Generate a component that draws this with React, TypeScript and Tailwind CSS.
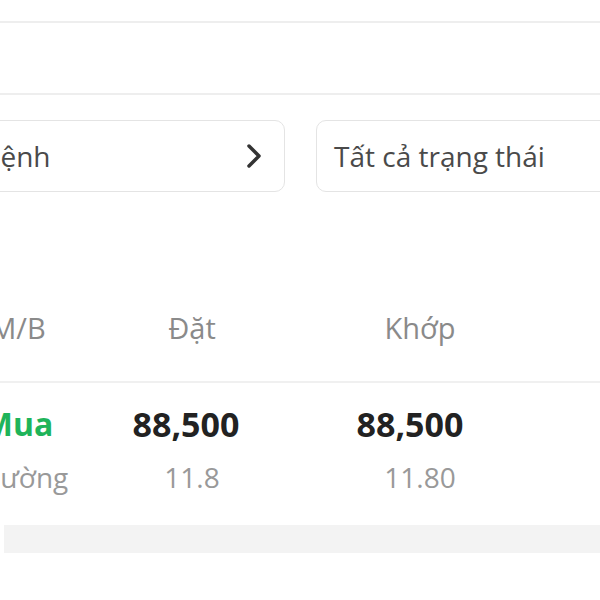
export default function App() {
  return (
    <div className="w-[600px] h-[600px] overflow-hidden bg-white font-['Open_Sans',sans-serif]">
      <div className="h-[21px]" />
      <div className="h-[2px] bg-[#eeeeee]" />
      <div className="h-[70px]" />
      <div className="h-[2px] bg-[#eeeeee]" />

      {/* filters */}
      <div className="mt-[25px] flex gap-[31px] ml-[-86px] w-[1100px]">
        <div className="w-[371px] h-[72px] shrink-0 rounded-[10px] border border-[#e4e4e4] flex items-center justify-between pl-[17px] pr-[21px]">
          <span className="text-[28px] text-[#4a4a4a]">Loại lệnh</span>
          <svg width="18" height="26" viewBox="0 0 18 26" fill="none">
            <polyline points="4,3 14,13 4,23" stroke="#333" strokeWidth="3.5" strokeLinecap="round" strokeLinejoin="round" />
          </svg>
        </div>
        <div className="w-[371px] h-[72px] shrink-0 rounded-[10px] border border-[#e4e4e4] flex items-center pl-[17px]">
          <span className="text-[28px] text-[#4a4a4a]">Tất cả trạng thái</span>
        </div>
      </div>

      {/* table header */}
      <div className="mt-[117px] flex ml-[-62px] text-[29px] leading-[38px] text-[#8a8a8a]">
        <div className="w-[160px] text-center">M/B</div>
        <div className="w-[188px] text-center">Đặt</div>
        <div className="w-[268px] text-center">Khớp</div>
      </div>
      <div className="mt-[34px] h-[2px] bg-[#f0f0f0]" />

      {/* row */}
      <div className="mt-[21px] flex ml-[-62px]">
        <div className="w-[160px] flex flex-col items-center">
          <span className="text-[32px] leading-[40px] font-bold text-[#1fb45a]">Mua</span>
          <span className="mt-[15px] text-[28px] leading-[36px] text-[#999999]">Thường</span>
        </div>
        <div className="w-[188px] flex flex-col items-center">
          <span className="text-[34px] leading-[40px] font-bold text-[#222222] pr-[12px]">88,500</span>
          <span className="mt-[15px] text-[28px] leading-[36px] text-[#999999]">11.8</span>
        </div>
        <div className="w-[268px] flex flex-col items-center">
          <span className="text-[34px] leading-[40px] font-bold text-[#222222] pr-[20px]">88,500</span>
          <span className="mt-[15px] text-[28px] leading-[36px] text-[#999999]">11.80</span>
        </div>
      </div>

      <div className="mt-[30px] ml-[4px] h-[28px] bg-[#f3f3f3]" />
    </div>
  );
}
